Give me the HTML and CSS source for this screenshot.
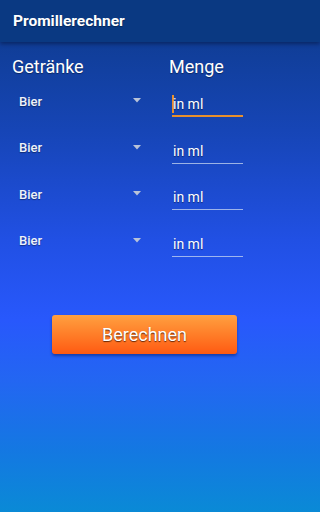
FILE: index.html
```html
<!DOCTYPE html>
<html lang="de">
<head>
<meta charset="utf-8">
<title>Promillerechner</title>
<link rel="stylesheet" href="styles.css">
</head>
<body>
<header class="toolbar"><span class="title">Promillerechner</span></header>
<main class="form">
  <div class="head">
    <span class="h-drink">Getränke</span>
    <span class="h-amount">Menge</span>
  </div>
  <div class="rows">
    <div class="row">
      <div class="spinner"><span>Bier</span><svg class="arrow" width="8" height="5" viewBox="0 0 8 5"><polygon points="0,0 8,0 4,4.5"/></svg></div>
      <div class="field active"><span class="cursor"></span>in ml</div>
    </div>
    <div class="row">
      <div class="spinner"><span>Bier</span><svg class="arrow" width="8" height="5" viewBox="0 0 8 5"><polygon points="0,0 8,0 4,4.5"/></svg></div>
      <div class="field">in ml</div>
    </div>
    <div class="row">
      <div class="spinner"><span>Bier</span><svg class="arrow" width="8" height="5" viewBox="0 0 8 5"><polygon points="0,0 8,0 4,4.5"/></svg></div>
      <div class="field">in ml</div>
    </div>
    <div class="row">
      <div class="spinner"><span>Bier</span><svg class="arrow" width="8" height="5" viewBox="0 0 8 5"><polygon points="0,0 8,0 4,4.5"/></svg></div>
      <div class="field">in ml</div>
    </div>
  </div>
  <div class="actions"><button class="calc">Berechnen</button></div>
</main>
</body>
</html>
```
FILE: styles.css
```css
html, body {
  margin: 0;
  height: 100%;
}
body {
  min-height: 512px;
  overflow: hidden;
  font-family: Roboto, "Liberation Sans", sans-serif;
  color: #fff;
  background: linear-gradient(to bottom, #0d3a88 0px, #1645b6 130px, #2150e4 240px, #2858fc 320px, #2366f2 380px, #1478e2 450px, #0a8ad6 512px);
  display: flex;
  flex-direction: column;
}
.toolbar {
  height: 42px;
  flex: none;
  background: #0a3982;
  box-shadow: 0 2px 4px rgba(0, 10, 40, 0.45);
  display: flex;
  align-items: center;
  padding-left: 13px;
  position: relative;
  z-index: 1;
}
.title {
  font-size: 15.5px;
  font-weight: bold;
  line-height: 20px;
  text-shadow: 0 1px 1px rgba(0, 0, 0, 0.35);
}
.form {
  display: flex;
  flex-direction: column;
}
.head {
  margin-top: 14px;
  display: grid;
  grid-template-columns: 157px auto;
  padding-left: 12px;
  font-size: 18px;
  line-height: 21px;
  text-shadow: 0 1px 1px rgba(0, 0, 0, 0.4);
}
.rows {
  margin-top: 15px;
  display: flex;
  flex-direction: column;
}
.row {
  height: 46.67px;
  display: grid;
  grid-template-columns: 122px 71px;
  column-gap: 31px;
  padding-left: 19px;
  align-items: start;
}
.spinner {
  margin-top: -3px;
  height: 24px;
  display: flex;
  align-items: center;
  justify-content: space-between;
  font-size: 13px;
  font-weight: 500;
  color: #eef2fa;
  text-shadow: 0 1px 1px rgba(0, 0, 0, 0.4);
}
.arrow {
  fill: #b9c3d8;
  margin-top: -1px;
}
.field {
  height: 24px;
  line-height: 24px;
  font-size: 14px;
  padding-left: 1px;
  border-bottom: 1px solid rgba(200, 215, 240, 0.75);
  text-shadow: 0 1px 1px rgba(0, 0, 0, 0.45);
  display: flex;
  align-items: center;
}
.field.active {
  height: 23px;
  border-bottom: 2px solid #e8902c;
}
.cursor {
  width: 2px;
  height: 18px;
  background: #e8902c;
  margin-right: -1px;
  margin-left: -1px;
}
.actions {
  margin-top: 36px;
  display: flex;
  padding-left: 52px;
}
.calc {
  width: 185px;
  height: 39px;
  border: none;
  border-radius: 3px;
  background: linear-gradient(to bottom, #ffa040 0%, #ff7a26 55%, #ff5a12 100%);
  box-shadow: 0 2px 3px rgba(0, 20, 80, 0.45);
  color: #fff;
  font-family: Roboto, "Liberation Sans", sans-serif;
  font-size: 18px;
  text-shadow: 0 1px 1px rgba(60, 20, 0, 0.8);
  padding: 0;
}
```
